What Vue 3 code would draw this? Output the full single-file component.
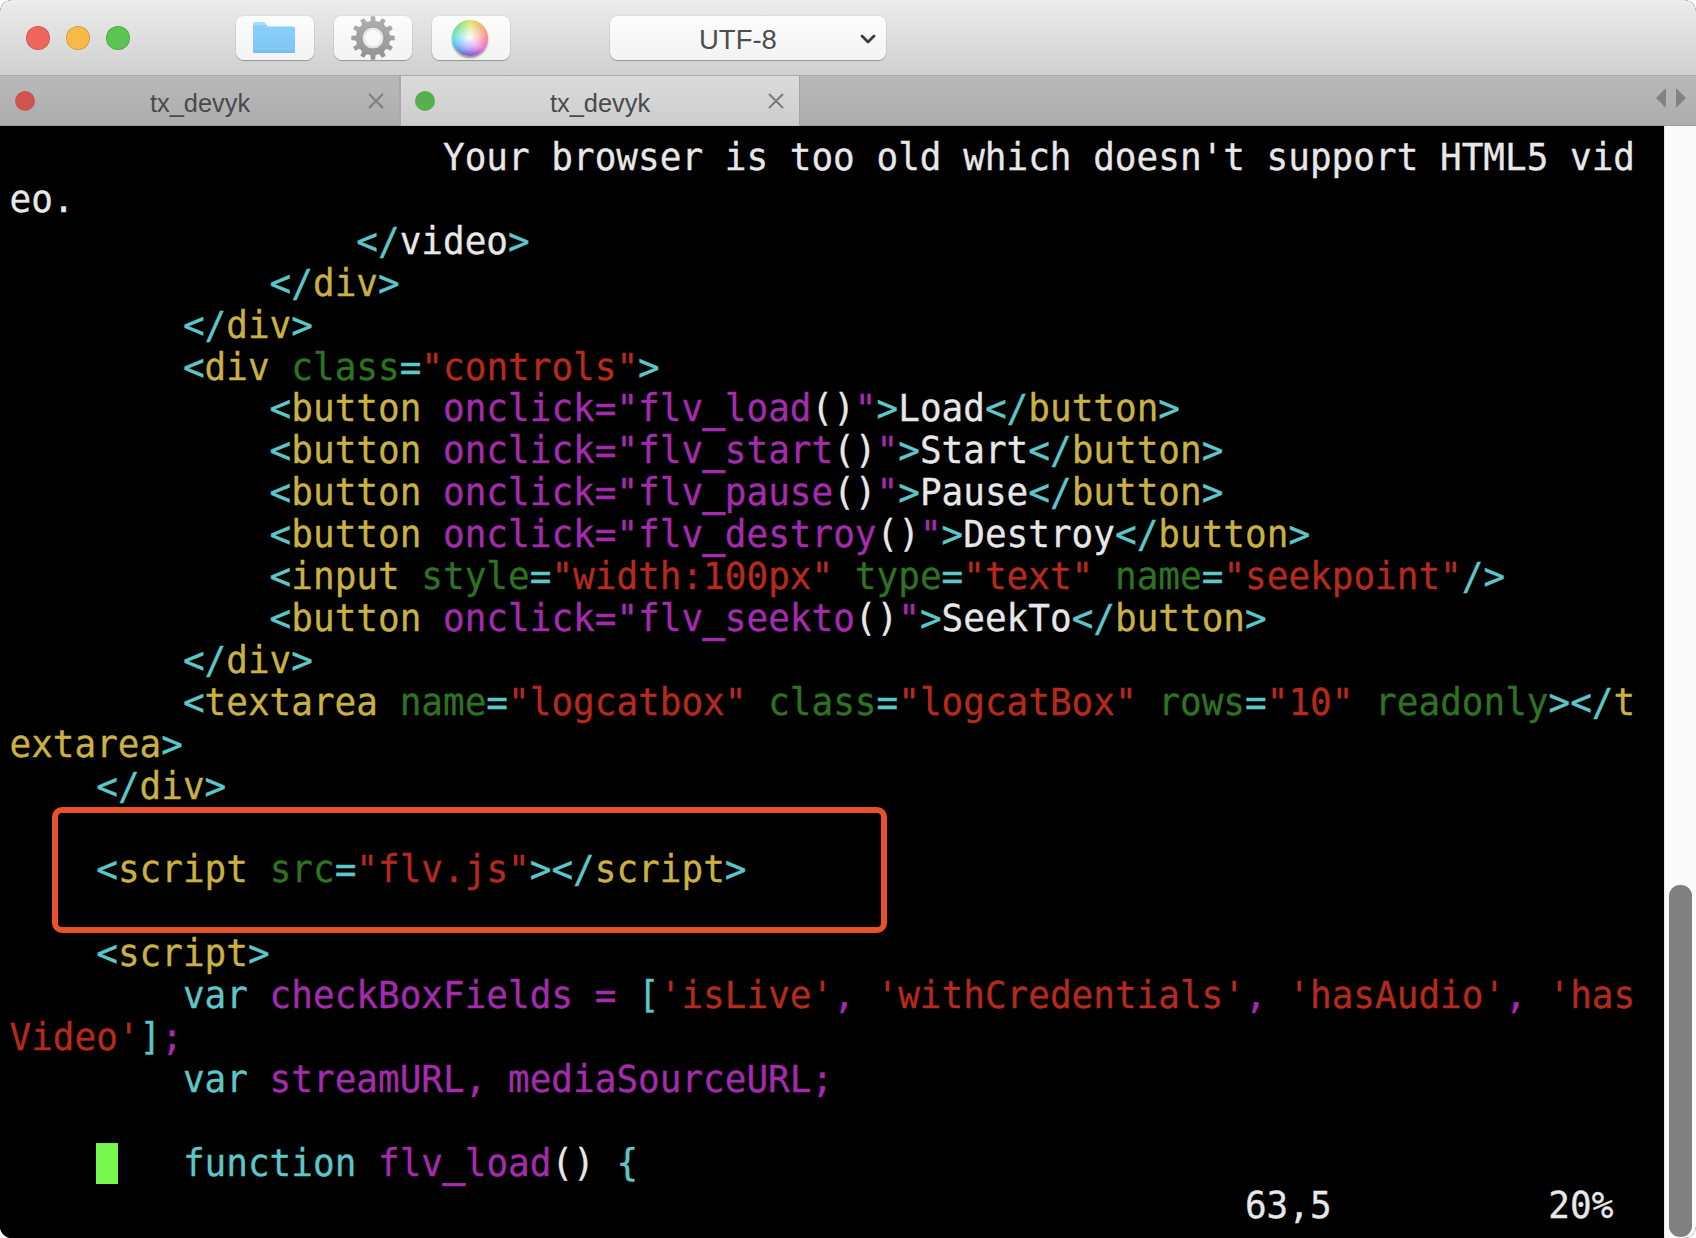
<script setup>
const C = 'c', Y = 'y', G = 'g', R = 'r', M = 'm', W = 'w'

const btn = (fn, label) => [
  [W, '            '], [C, '<'], [Y, 'button'], [W, ' '], [M, 'onclick="flv'], ['m us', '_'], [M, fn], [W, '()'], [M, '"'], [C, '>'],
  [W, label], [C, '</'], [Y, 'button'], [C, '>']
]
const attr = (name, value) => [[G, name], [C, '='], [R, `"${value}"`]]

const lines = [
  [[W, "                    Your browser is too old which doesn't support HTML5 vid"]],
  [[W, 'eo.']],
  [[W, '                '], [C, '</'], [W, 'video'], [C, '>']],
  [[W, '            '], [C, '</'], [Y, 'div'], [C, '>']],
  [[W, '        '], [C, '</'], [Y, 'div'], [C, '>']],
  [[W, '        '], [C, '<'], [Y, 'div'], [W, ' '], ...attr('class', 'controls'), [C, '>']],
  btn('load', 'Load'),
  btn('start', 'Start'),
  btn('pause', 'Pause'),
  btn('destroy', 'Destroy'),
  [[W, '            '], [C, '<'], [Y, 'input'], [W, ' '], ...attr('style', 'width:100px'), [W, ' '], ...attr('type', 'text'), [W, ' '], ...attr('name', 'seekpoint'), [C, '/>']],
  btn('seekto', 'SeekTo'),
  [[W, '        '], [C, '</'], [Y, 'div'], [C, '>']],
  [[W, '        '], [C, '<'], [Y, 'textarea'], [W, ' '], ...attr('name', 'logcatbox'), [W, ' '], ...attr('class', 'logcatBox'), [W, ' '], ...attr('rows', '10'), [W, ' '], [G, 'readonly'], [C, '></'], [Y, 't']],
  [[Y, 'extarea'], [C, '>']],
  [[W, '    '], [C, '</'], [Y, 'div'], [C, '>']],
  [],
  [[W, '    '], [C, '<'], [Y, 'script'], [W, ' '], ...attr('src', 'flv.js'), [C, '></'], [Y, 'script'], [C, '>']],
  [],
  [[W, '    '], [C, '<'], [Y, 'script'], [C, '>']],
  [[W, '        '], [C, 'var'], [W, ' '], [M, 'checkBoxFields = '], [C, '['], [R, "'isLive'"], [M, ', '], [R, "'withCredentials'"], [M, ', '], [R, "'hasAudio'"], [M, ', '], [R, "'has"]],
  [[R, "Video'"], [C, ']'], [M, ';']],
  [[W, '        '], [C, 'var'], [W, ' '], [M, 'streamURL, mediaSourceURL;']],
  [],
  [[W, '    '], ['cursor', ' '], [W, '   '], [C, 'function'], [W, ' '], [M, 'flv'], ['m us', '_'], [M, 'load'], [W, '()'], [W, ' '], [C, '{']],
  [[W, ' '.repeat(57) + '63,5' + ' '.repeat(10) + '20%']]
]

const gearPath = (() => {
  const teeth = 12, cx = 22, cy = 22
  const pts = []
  for (let i = 0; i < teeth; i++) {
    const a = (i / teeth) * Math.PI * 2 - Math.PI / 2
    const step = (Math.PI * 2) / teeth
    const p = (r, o) => `${(cx + r * Math.cos(a + o * step)).toFixed(2)} ${(cy + r * Math.sin(a + o * step)).toFixed(2)}`
    pts.push(p(17, -0.5), p(17.5, -0.28), p(21.8, -0.19), p(21.8, 0.19), p(17.5, 0.28))
  }
  return `M${pts.join('L')}Z`
})()

const tabs = [
  { id: 1, dot: 'dot-red', active: false },
  { id: 2, dot: 'dot-green', active: true }
]
</script>

<template>
  <div class="window">
    <header class="toolbar">
      <div class="lights">
        <span class="light red"></span>
        <span class="light amber"></span>
        <span class="light green"></span>
      </div>
      <div class="tools">
        <div class="tool">
          <svg class="folder" width="44" height="34" viewBox="0 0 44 34">
            <defs>
              <linearGradient id="folder" x1="0" y1="0" x2="0" y2="1">
                <stop offset="0" stop-color="#8bd0fb" />
                <stop offset="1" stop-color="#7ec5f6" />
              </linearGradient>
            </defs>
            <path d="M1 3a2 2 0 0 1 2-2h9l3 3v2H1z" fill="#a5dcfb" />
            <path d="M1 4h13l2 1.5h25a2 2 0 0 1 2 2V30a2 2 0 0 1-2 2H3a2 2 0 0 1-2-2z" fill="url(#folder)" />
            <rect x="1" y="29" width="42" height="3" rx="1.5" fill="#76bcf0" />
          </svg>
        </div>
        <div class="tool">
          <svg width="44" height="44" viewBox="0 0 44 44">
            <defs>
              <linearGradient id="gear" x1="0" y1="0" x2="0" y2="1">
                <stop offset="0" stop-color="#b0b0b0" />
                <stop offset="1" stop-color="#929292" />
              </linearGradient>
            </defs>
            <path :d="gearPath" fill="url(#gear)" />
            <circle cx="22" cy="22" r="11" fill="#e6e6e6" stroke="#8c8c8c" stroke-width="0.8" />
            <circle cx="22" cy="22" r="8" fill="#fafafa" />
          </svg>
        </div>
        <div class="tool">
          <span class="wheel"></span>
        </div>
      </div>
      <div class="encoding">
        <span class="encoding-label">UTF-8</span>
        <svg class="chevron" width="16" height="10" viewBox="0 0 16 10">
          <path d="M2 2l6 6 6-6" fill="none" stroke="#3c3c3c" stroke-width="2.8" stroke-linecap="round" stroke-linejoin="round" />
        </svg>
      </div>
    </header>

    <nav class="tabbar">
      <div v-for="tab in tabs" :key="tab.id" class="tab" :class="{ active: tab.active }">
        <span class="tab-dot" :class="tab.dot"></span>
        <span class="tab-title">tx_devyk</span>
        <svg class="tab-close" width="18" height="18" viewBox="0 0 18 18">
          <path d="M2 2l14 14M16 2L2 16" stroke="#7d7d7d" stroke-width="2" fill="none" />
        </svg>
      </div>
      <div class="tab-fill">
        <span class="arrow arrow-left"></span>
        <span class="arrow arrow-right"></span>
      </div>
    </nav>

    <main class="content">
      <div class="terminal">
        <div v-for="(line, i) in lines" :key="i" class="line"><span v-for="(seg, j) in line" :key="j" :class="seg[0]">{{ seg[1] }}</span></div>
        <div class="callout"></div>
      </div>
      <div class="scrollbar">
        <div class="thumb"></div>
      </div>
    </main>
  </div>
</template>

<style>
html, body {
  margin: 0;
  background: #fff;
}
</style>

<style scoped>
.window {
  width: 1696px;
  height: 1238px;
  display: flex;
  flex-direction: column;
  overflow: hidden;
  border-radius: 12px;
  background: #000;
}
.toolbar {
  height: 76px;
  flex: none;
  box-sizing: border-box;
  display: flex;
  align-items: flex-start;
  padding: 16px 0 0 26px;
  background: linear-gradient(#ececec, #d0d0d0);
  border-bottom: 1px solid #a8a8a8;
}
.lights {
  display: flex;
  gap: 16px;
  margin-top: 10px;
}
.light {
  width: 24px;
  height: 24px;
  box-sizing: border-box;
  border-radius: 50%;
  border: 1px solid rgba(0, 0, 0, 0.14);
}
.red { background: #f0665c; }
.amber { background: #f6bb47; }
.green { background: #5cc450; }
.tools {
  display: flex;
  gap: 20px;
  margin-left: 106px;
}
.tool {
  width: 78px;
  height: 44px;
  box-sizing: border-box;
  border-radius: 8px;
  background: linear-gradient(#fcfcfc, #f3f3f3);
  box-shadow: 0 0 0 1px rgba(0, 0, 0, 0.04), 0 1px 1px rgba(0, 0, 0, 0.28);
  display: flex;
  align-items: center;
  justify-content: center;
}
.folder {
  margin-right: 2px;
}
.wheel {
  width: 36px;
  height: 36px;
  border-radius: 50%;
  margin-right: 2px;
  background:
    linear-gradient(rgba(60, 40, 90, 0) 78%, rgba(60, 40, 90, 0.28) 100%),
    radial-gradient(circle at 50% 50%, rgba(255, 255, 255, 0.95) 0, rgba(255, 255, 255, 0.5) 35%, rgba(255, 255, 255, 0) 68%),
    conic-gradient(#d8e46a, #f5b26a 45deg, #f5859a 90deg, #e26fd8 140deg, #9a6ff2 180deg, #5f9ff6 225deg, #5cdbe8 270deg, #7ce288 315deg, #d8e46a);
  box-shadow: 0 2px 2px rgba(60, 60, 60, 0.5);
}
.encoding {
  width: 276px;
  height: 44px;
  margin-left: 100px;
  box-sizing: border-box;
  border-radius: 8px;
  background: linear-gradient(#fcfcfc, #f3f3f3);
  box-shadow: 0 0 0 1px rgba(0, 0, 0, 0.04), 0 1px 1px rgba(0, 0, 0, 0.28);
  display: flex;
  align-items: center;
  padding-left: 89px;
  padding-right: 10px;
  justify-content: space-between;
}
.encoding-label {
  font: 27.5px/44px "Liberation Sans", Arial, sans-serif;
  color: #4e4e4e;
  margin-top: 4px;
}
.chevron {
  margin-top: 2px;
}
.tabbar {
  height: 50px;
  flex: none;
  display: flex;
  background: #aaa;
}
.tab {
  box-sizing: border-box;
  width: 399px;
  height: 50px;
  display: grid;
  grid-template-columns: 1fr auto 1fr;
  align-items: center;
  padding: 0 14px 0 15px;
  background: linear-gradient(#b9b9b9, #adadad);
  border-bottom: 1px solid #9a9a9a;
}
.tab.active {
  margin-left: 2px;
  width: 399px;
  padding-left: 14px;
  background: linear-gradient(#dbdbdb, #cdcdcd);
  border-right: 1px solid #a4a4a4;
  border-bottom: 1px solid #bdbdbd;
}
.tab-dot {
  width: 20px;
  height: 20px;
  border-radius: 50%;
  margin-top: -2px;
}
.dot-red { background: #d0534f; }
.dot-green { background: #56b04d; }
.tab-title {
  font: 25.4px/50px "Liberation Sans", Arial, sans-serif;
  color: #4a4a4a;
  margin-top: 2px;
}
.tab-close {
  justify-self: end;
  margin-top: -2px;
}
.tab-fill {
  flex: 1;
  background: linear-gradient(#b9b9b9, #adadad);
  border-bottom: 1px solid #9a9a9a;
  display: flex;
  justify-content: flex-end;
  align-items: center;
  gap: 10px;
  padding-right: 10px;
}
.arrow {
  width: 0;
  height: 0;
  border-top: 10px solid transparent;
  border-bottom: 10px solid transparent;
  margin-top: -6px;
}
.arrow-left { border-right: 10px solid #828282; }
.arrow-right { border-left: 10px solid #828282; }
.content {
  flex: 1;
  display: flex;
  min-height: 0;
}
.terminal {
  position: relative;
  flex: 1;
  min-width: 0;
  box-sizing: border-box;
  padding: 10px 0 0 9.5px;
  background: #000;
  overflow: hidden;
  font-family: "DejaVu Sans Mono", monospace;
  font-size: 36px;
  line-height: 41.92px;
  -webkit-text-stroke: 0.3px currentColor;
}
.line {
  height: 41.92px;
  white-space: pre;
  transform: scaleY(1.05);
}
.w { color: #e8e8e8; }
.c { color: #5cc7c9; }
.y { color: #c9b145; }
.g { color: #2e7322; }
.r { color: #b62a1d; }
.m { color: #a52bae; }
.us { -webkit-text-stroke: 1.6px currentColor; }
.cursor {
  display: inline-block;
  height: 39px;
  margin-top: 2px;
  vertical-align: top;
  background: #78f84c;
}
.callout {
  position: absolute;
  left: 52px;
  top: 681px;
  width: 835px;
  height: 126px;
  box-sizing: border-box;
  border: 6px solid #e8512a;
  border-radius: 10px;
}
.scrollbar {
  width: 32px;
  flex: none;
  box-sizing: border-box;
  background: #fafafa;
  border-left: 1px solid #e6e6e6;
  padding: 759px 4px 0 4px;
}
.thumb {
  height: 352px;
  border-radius: 11px;
  background: #808080;
}
</style>
